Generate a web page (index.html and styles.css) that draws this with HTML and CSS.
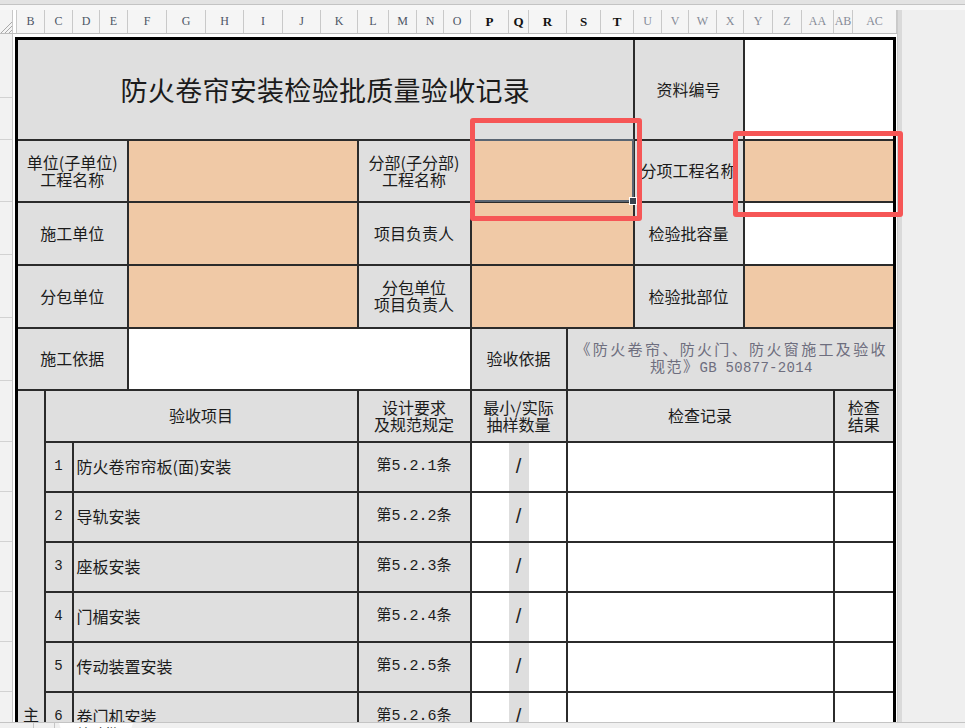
FILE: index.html
```html
<!DOCTYPE html>
<html lang="zh-CN">
<head>
  <meta charset="UTF-8" />
  <title>防火卷帘安装检验批质量验收记录</title>
  <link rel="stylesheet" href="styles.css">
</head>
<body>

  <div class="app">
    <div class="ribbon"></div>

    <div class="corner">
      <svg width="13" height="24" viewBox="0 0 13 24">
        <path d="M12 12 L1 23 M12 16 L5 23 M12 20 L9 23" stroke="#a9a9a9" stroke-width="1" fill="none"/>
      </svg>
    </div>

    <div class="colhead">
      <div class="gap"></div>
      <div>B</div><div>C</div><div>D</div><div>E</div><div>F</div><div>G</div><div>H</div>
      <div>I</div><div>J</div><div>K</div><div>L</div><div>M</div><div>N</div><div>O</div>
      <div class="on">P</div><div class="on">Q</div><div class="on">R</div><div class="on">S</div><div class="on">T</div>
      <div class="dim">U</div><div class="dim">V</div><div class="dim">W</div><div class="dim">X</div>
      <div class="dim">Y</div><div class="dim">Z</div><div class="dim">AA</div><div class="dim">AB</div><div class="dim">AC</div>
    </div>

    <div class="vbar"></div>
    <div class="void"></div>

    <div class="rowhead">
      <div></div><div></div><div></div><div></div><div></div><div></div><div></div>
      <div></div><div></div><div></div><div></div><div></div><div></div>
    </div>

    <div class="sheet">
      <table class="form">
        <colgroup>
          <col class="k-side"><col class="k-no"><col class="k-lbl"><col class="k-wide"><col class="k-rule">
          <col class="k-qty"><col class="k-rec"><col class="k-mid"><col class="k-rec2"><col class="k-res">
        </colgroup>

        <tr class="h-title">
          <td colspan="7" class="lbl title">防火卷帘安装检验批质量验收记录</td>
          <td class="lbl">资料编号</td>
          <td colspan="2"></td>
        </tr>
        <tr class="h-info">
          <td colspan="3" class="lbl">单位(子单位)<br>工程名称</td>
          <td class="fill"></td>
          <td class="lbl">分部(子分部)<br>工程名称</td>
          <td colspan="2" class="fill pick"><div class="sel"></div></td>
          <td class="lbl">分项工程名称</td>
          <td colspan="2" class="fill"></td>
        </tr>
        <tr class="h-info2">
          <td colspan="3" class="lbl">施工单位</td>
          <td class="fill"></td>
          <td class="lbl">项目负责人</td>
          <td colspan="2" class="fill"></td>
          <td class="lbl">检验批容量</td>
          <td colspan="2"></td>
        </tr>
        <tr class="h-info2">
          <td colspan="3" class="lbl">分包单位</td>
          <td class="fill"></td>
          <td class="lbl">分包单位<br>项目负责人</td>
          <td colspan="2" class="fill"></td>
          <td class="lbl">检验批部位</td>
          <td colspan="2" class="fill"></td>
        </tr>
        <tr class="h-info">
          <td colspan="3" class="lbl">施工依据</td>
          <td colspan="2"></td>
          <td class="lbl">验收依据</td>
          <td colspan="4" class="lbl basis">《防火卷帘、防火门、防火窗施工及验收规范》<span class="mono">GB 50877-2014</span></td>
        </tr>

        <tr class="h-head">
          <td rowspan="7" class="lbl side"><div class="side-txt">主控项目</div></td>
          <td colspan="3" class="lbl">验收项目</td>
          <td class="lbl">设计要求<br>及规范规定</td>
          <td class="lbl">最小/实际<br>抽样数量</td>
          <td colspan="3" class="lbl">检查记录</td>
          <td class="lbl">检查<br>结果</td>
        </tr>
        <tr class="h-item">
          <td class="lbl no">1</td>
          <td colspan="2" class="lbl name">防火卷帘帘板(面)安装</td>
          <td class="lbl rule">第5.2.1条</td>
          <td class="qty">/</td>
          <td colspan="3"></td>
          <td></td>
        </tr>
        <tr class="h-item">
          <td class="lbl no">2</td>
          <td colspan="2" class="lbl name">导轨安装</td>
          <td class="lbl rule">第5.2.2条</td>
          <td class="qty">/</td>
          <td colspan="3"></td>
          <td></td>
        </tr>
        <tr class="h-item">
          <td class="lbl no">3</td>
          <td colspan="2" class="lbl name">座板安装</td>
          <td class="lbl rule">第5.2.3条</td>
          <td class="qty">/</td>
          <td colspan="3"></td>
          <td></td>
        </tr>
        <tr class="h-item">
          <td class="lbl no">4</td>
          <td colspan="2" class="lbl name">门楣安装</td>
          <td class="lbl rule">第5.2.4条</td>
          <td class="qty">/</td>
          <td colspan="3"></td>
          <td></td>
        </tr>
        <tr class="h-item">
          <td class="lbl no">5</td>
          <td colspan="2" class="lbl name">传动装置安装</td>
          <td class="lbl rule">第5.2.5条</td>
          <td class="qty">/</td>
          <td colspan="3"></td>
          <td></td>
        </tr>
        <tr class="h-item">
          <td class="lbl no">6</td>
          <td colspan="2" class="lbl name">卷门机安装</td>
          <td class="lbl rule">第5.2.6条</td>
          <td class="qty">/</td>
          <td colspan="3"></td>
          <td></td>
        </tr>
      </table>
    </div>

    <div class="tabs">
      <span class="tab-btn"></span>
      <span class="tab-btn"></span>
      <span class="tab">检验批</span>
    </div>

    <!-- red call-out boxes -->
    <div class="mark mark-a"></div>
    <div class="mark mark-b"></div>
  </div>

</body>
</html>
```

FILE: styles.css
```css
* {
  box-sizing: border-box;
}

html, body {
  margin: 0;
  height: 100%;
}

body {
  font-family: "Noto Sans CJK SC", "Noto Sans", sans-serif;
  background: #efefef;
  color: #1b1b1b;
  overflow: hidden;
}

.app {
  position: relative;
  width: 965px;
  height: 728px;
  display: grid;
  grid-template-columns: 13px 884px 5px 1fr;
  grid-template-rows: 10px 24px 688px 6px;
  overflow: hidden;
}

.ribbon {
  grid-column: 1 / -1;
  background: linear-gradient(#e3e3e3 0 4px, #c4c4c4 4px 5px, #f7f7f7 5px);
}

/* column letters */
.corner {
  grid-column: 1;
  grid-row: 2;
  background: #f4f4f4;
  border-right: 1px solid #c8c8c8;
  border-bottom: 1px solid #bdbdbd;
}

.corner svg {
  display: block;
}

.colhead {
  grid-column: 2;
  grid-row: 2;
  display: grid;
  grid-template-columns: 4px 28px 28px 27px 28px 39px 39px 38px 39px 38px 37px 31px 28px 27px 27px
    38px 20px 38px 34px 33px 28px 27px 28px 27px 29px 29px 32px 19px 44px;
  background: #f5f5f5;
  border-bottom: 1px solid #bdbdbd;
  font-family: "Liberation Serif", serif;
  font-size: 12px;
  color: #4d5566;
}

.colhead div {
  border-right: 1px solid #c9c9c9;
  text-align: center;
  line-height: 23px;
}

.colhead .gap {
  background: #fff;
}

.colhead .on {
  color: #111;
  font-weight: bold;
  font-size: 13px;
}

.colhead .dim {
  color: #858b97;
}

.vbar {
  grid-column: 3;
  grid-row: 2 / 4;
  background: #dadada;
  border-left: 1px solid #cbcbcb;
}

.void {
  grid-column: 4;
  grid-row: 2 / 4;
  background: #efefef;
}

/* row numbers strip */
.rowhead {
  grid-column: 1;
  grid-row: 3;
  display: grid;
  grid-template-rows: 64px 42px 62px 53px 63px 63px 61px repeat(6, 50px);
  background: #f2f2f2;
  border-right: 1px solid #c6c6c6;
}

.rowhead div {
  border-bottom: 1px solid #d2d2d2;
}

.sheet {
  grid-column: 2;
  grid-row: 3;
  background: #fff;
  overflow: hidden;
  padding: 3px 0 0 2px;
}

/* the form itself */
.form {
  border-collapse: collapse;
  table-layout: fixed;
  width: 878px;
  border: 3px solid #000;
  font-size: 16px;
  line-height: 17px;
}

.form td {
  border: 2px solid #2b2b2b;
  padding: 0;
  text-align: center;
  vertical-align: middle;
  background: #fff;
  white-space: nowrap;
}

.k-side { width: 28px; }
.k-no { width: 28px; }
.k-lbl { width: 55px; }
.k-wide { width: 230px; }
.k-rule { width: 113px; }
.k-qty { width: 96px; }
.k-rec { width: 67px; }
.k-mid { width: 110px; }
.k-rec2 { width: 90px; }
.k-res { width: 61px; }

.h-title { height: 101px; }
.h-info { height: 62px; }
.h-info2 { height: 63px; }
.h-head { height: 52px; }
.h-item { height: 50px; }

.form td.lbl {
  background: #dfdfdf;
}

.form td.fill {
  background: #f0c9a6;
}

.form td.title {
  font-size: 27px;
  letter-spacing: 0.3px;
}

.form td.basis {
  white-space: normal;
  text-align: justify;
  text-align-last: center;
  padding: 0 6px 0 8px;
  font-size: 15px;
  letter-spacing: 1.5px;
  color: #6e6e7e;
}

.basis .mono {
  font-family: "Liberation Mono", monospace;
  font-size: 14px;
  letter-spacing: 0.3px;
}

.form td.side {
  vertical-align: top;
}

.side-txt {
  height: 340px;
  padding-top: 316px;
  writing-mode: vertical-rl;
  margin: 0 auto;
  line-height: 26px;
}

.form td.no {
  font-family: "Liberation Mono", "Noto Sans CJK SC", monospace;
  font-size: 14px;
}

.form td.name {
  text-align: left;
  padding-left: 3px;
}

.form td.rule {
  font-family: "Liberation Mono", "Noto Sans CJK SC", monospace;
  font-size: 15px;
}

.form td.qty {
  background: linear-gradient(to right, #fff 0 37px, #dedede 37px 57px, #fff 57px);
  font-family: "Liberation Sans", sans-serif;
  font-size: 20px;
  color: #222;
}

/* active cell outline with fill handle */
.form td.pick {
  position: relative;
}

.sel {
  position: absolute;
  inset: -2px -1px -1px 0;
  border: 2px solid #5a6572;
}

.sel::after {
  content: "";
  position: absolute;
  right: -5px;
  bottom: -5px;
  width: 6px;
  height: 6px;
  background: #39424d;
  border: 1px solid #fff;
}

/* sheet tabs */
.tabs {
  grid-column: 1 / -1;
  grid-row: 4;
  display: flex;
  align-items: flex-start;
  padding-left: 13px;
  background: #f0f0f0;
  border-top: 1px solid #c4c4c4;
  overflow: hidden;
}

.tab-btn {
  width: 21px;
  height: 20px;
  border-right: 1px solid #c4c4c4;
}

.tab {
  margin-left: 4px;
  padding: 1px 14px 0 18px;
  background: #fff;
  clip-path: polygon(0 0, 100% 0, 92% 100%, 8% 100%);
  font-size: 14px;
  line-height: 18px;
}

.mark {
  position: absolute;
  border: 5px solid #f65656;
  border-radius: 3px;
}

.mark-a {
  left: 470px;
  top: 118px;
  width: 172px;
  height: 103px;
}

.mark-b {
  left: 733px;
  top: 131px;
  width: 170px;
  height: 86px;
}
```
